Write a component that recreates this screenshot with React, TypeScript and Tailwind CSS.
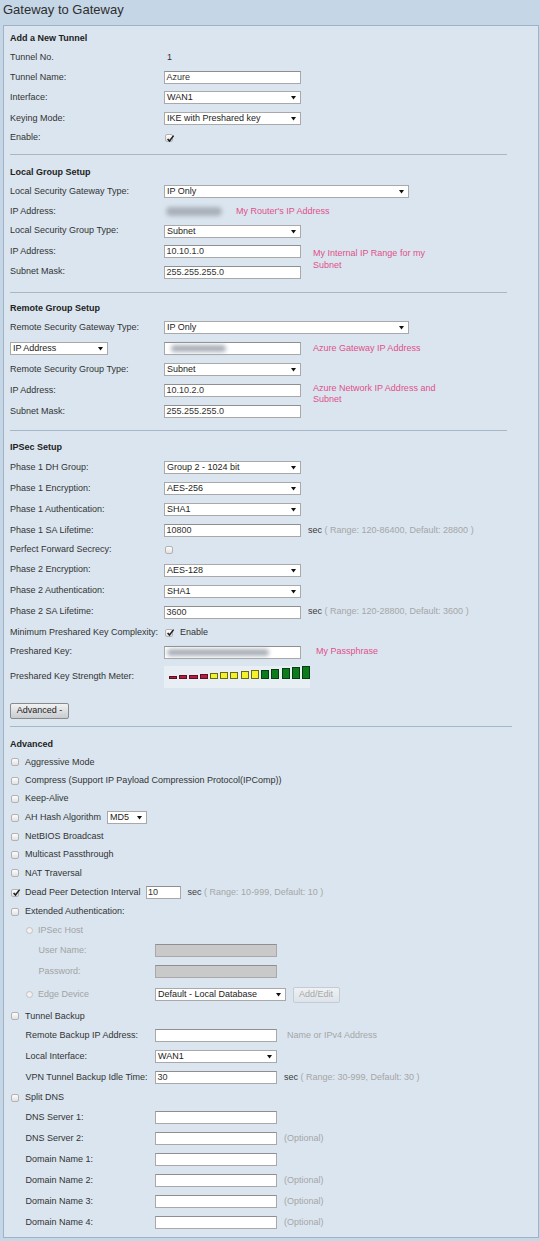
import React from "react";

type Kids = { children?: React.ReactNode };

function Arrow() {
  return (
    <svg width="5" height="5" viewBox="0 0 5 5" className="shrink-0">
      <path d="M0 1h5L2.5 4.6z" fill="#111" />
    </svg>
  );
}

function Check({ on = false, className = "" }: { on?: boolean; className?: string }) {
  return (
    <span
      className={`relative inline-block h-[8px] w-[8px] shrink-0 rounded-[2px] border border-[#b2b2b2] bg-linear-to-b from-[#fdfdfd] to-[#e1e1e1] ${className}`}
    >
      {on && (
        <svg className="absolute left-[-0.5px] top-[-1.5px]" width="9" height="9" viewBox="0 0 9 9">
          <path d="M1.6 4.9l1.9 2.1L7.6 1.6" stroke="#1e1e1e" strokeWidth="1.5" fill="none" />
        </svg>
      )}
    </span>
  );
}

function Radio() {
  return <span className="inline-block h-[7px] w-[7px] shrink-0 rounded-full border border-[#c2c2c2] bg-[#f1f1f1]" />;
}

function Box({ w = "w-[137px]", children, off = false }: Kids & { w?: string; off?: boolean }) {
  return (
    <div
      className={`flex h-[13px] ${w} shrink-0 items-center border border-[#a9a9a9] border-t-[#8f8f8f] pl-[1.5px] leading-none ${
        off ? "bg-[#c9c9c9]" : "bg-white"
      }`}
    >
      {children}
    </div>
  );
}

function Sel({ w = "w-[137px]", value }: { w?: string; value: string }) {
  return (
    <div
      className={`flex h-[13px] ${w} shrink-0 items-center justify-between border border-[#a9a9a9] bg-white pl-[2px] pr-[4px] leading-none text-[#222]`}
    >
      <span>{value}</span>
      <Arrow />
    </div>
  );
}

function Row({
  h,
  label,
  children,
  lw = "w-[154px]",
  lc = "",
}: Kids & { h: string; label?: React.ReactNode; lw?: string; lc?: string }) {
  return (
    <div className={`flex items-center ${h}`}>
      <div className={`${lw} shrink-0 ${lc}`}>{label}</div>
      {children}
    </div>
  );
}

function H({ children }: Kids) {
  return <div className="flex h-[18px] items-center font-bold text-[#222]">{children}</div>;
}

function Note({ children, className = "" }: Kids & { className?: string }) {
  return <div className={`text-[#e0508a] ${className}`}>{children}</div>;
}

function Sec({ range, ml = "ml-[7px]" }: { range: string; ml?: string }) {
  return (
    <span className={`${ml} whitespace-nowrap`}>
      <span className="text-[#3a3a3a]">sec</span>
      <span className="text-[#a6a6a6]"> ( {range} )</span>
    </span>
  );
}

function CheckRow({ h = "h-[18.4px]", on = false, children }: Kids & { h?: string; on?: boolean }) {
  return (
    <div className={`flex items-center ${h}`}>
      <Check on={on} className="ml-[1px] mr-[6px]" />
      {children}
    </div>
  );
}

function Hr({ mr = "mr-[25px]" }: { mr?: string }) {
  return <div className={`h-px ${mr} bg-[#a6b8c8]`} />;
}

const bars = [3, 3.5, 4, 4.5, 6, 6.5, 7, 7.5, 8.5, 9, 10, 11, 12, 13];

function Meter() {
  return (
    <div className="flex h-[22px] w-[146px] items-end gap-[2.2px] bg-[#e7eef4] pb-[9px] pl-[5px]">
      {bars.map((b, i) => (
        <span
          key={i}
          style={{ height: b }}
          className={`w-[8.3px] border ${
            i < 4
              ? "border-[#5e0f22] bg-[#b3203e]"
              : i < 9
              ? "border-[#6a6a16] bg-[#f3f12c]"
              : "border-[#053d0e] bg-[#0b7b1c]"
          }`}
        />
      ))}
    </div>
  );
}

function Blob({ w, h = "h-[7px]" }: { w: string; h?: string }) {
  return <div className={`${w} ${h} rounded-full bg-[#aab0b9] blur-[2px]`} />;
}

export default function App() {
  return (
    <div className="h-[1241px] w-[540px] overflow-hidden bg-[#c5d6e6] font-['Liberation_Sans',Arial,sans-serif] text-[9px] text-[#333]">
      <div className="h-[25px] pl-[3px] text-[13px] leading-[20px] text-[#2e2e2e]">Gateway to Gateway</div>

      <div className="ml-[3px] mr-[1px] border border-[#9fb3c5] bg-[#dae5ef] px-[6px] pb-[4px]">
        {/* Add a new tunnel */}
        <div className="pt-[4px] pb-[6.5px]">
          <H>Add a New Tunnel</H>
          <Row h="h-[19px]" label="Tunnel No.">
            <span className="pl-[3px]">1</span>
          </Row>
          <Row h="h-[20.5px]" label="Tunnel Name:">
            <Box>Azure</Box>
          </Row>
          <Row h="h-[20.5px]" label="Interface:">
            <Sel value="WAN1" />
          </Row>
          <Row h="h-[20.5px]" label="Keying Mode:">
            <Sel value="IKE with Preshared key" />
          </Row>
          <Row h="h-[19px]" label="Enable:">
            <Check on className="ml-[1px]" />
          </Row>
        </div>
        <Hr />

        {/* Local group */}
        <div className="pt-[8.3px] pb-[9.7px]">
          <H>Local Group Setup</H>
          <Row h="h-[20.5px]" label="Local Security Gateway Type:">
            <Sel w="w-[245px]" value="IP Only" />
          </Row>
          <Row h="h-[19px]" label="IP Address:">
            <div className="ml-[2px]">
              <Blob w="w-[56px]" h="h-[9px]" />
            </div>
            <Note className="ml-[14px]">My Router's IP Address</Note>
          </Row>
          <Row h="h-[20.5px]" label="Local Security Group Type:">
            <Sel value="Subnet" />
          </Row>
          <Row h="h-[20.5px]" label="IP Address:">
            <Box>10.10.1.0</Box>
            <Note className="ml-[12px] self-start pt-[7px] leading-[11.5px]">
              My Internal IP Range for my
              <br />
              Subnet
            </Note>
          </Row>
          <Row h="h-[20.5px]" label="Subnet Mask:">
            <Box>255.255.255.0</Box>
          </Row>
        </div>
        <Hr />

        {/* Remote group */}
        <div className="pt-[6.3px] pb-[8px]">
          <H>Remote Group Setup</H>
          <Row h="h-[21px]" label="Remote Security Gateway Type:">
            <Sel w="w-[245px]" value="IP Only" />
          </Row>
          <Row h="h-[21px]" label={<Sel w="w-[98px]" value="IP Address" />}>
            <Box>
              <div className="pl-[4px]">
                <Blob w="w-[55px]" />
              </div>
            </Box>
            <Note className="ml-[12px]">Azure Gateway IP Address</Note>
          </Row>
          <Row h="h-[21px]" label="Remote Security Group Type:">
            <Sel value="Subnet" />
          </Row>
          <Row h="h-[21px]" label="IP Address:">
            <Box>10.10.2.0</Box>
            <Note className="ml-[12px] self-start pt-[3px] leading-[11px]">
              Azure Network IP Address and
              <br />
              Subnet
            </Note>
          </Row>
          <Row h="h-[21px]" label="Subnet Mask:">
            <Box>255.255.255.0</Box>
          </Row>
        </div>
        <Hr />

        {/* IPSec */}
        <div className="pt-[7.8px] pb-[7.4px]">
          <H>IPSec Setup</H>
          <Row h="h-[21px]" label="Phase 1 DH Group:">
            <Sel value="Group 2 - 1024 bit" />
          </Row>
          <Row h="h-[21px]" label="Phase 1 Encryption:">
            <Sel value="AES-256" />
          </Row>
          <Row h="h-[21px]" label="Phase 1 Authentication:">
            <Sel value="SHA1" />
          </Row>
          <Row h="h-[20.5px]" label="Phase 1 SA Lifetime:">
            <Box>10800</Box>
            <Sec range="Range: 120-86400, Default: 28800" />
          </Row>
          <Row h="h-[19px]" label="Perfect Forward Secrecy:">
            <Check className="ml-[1px]" />
          </Row>
          <Row h="h-[21px]" label="Phase 2 Encryption:">
            <Sel value="AES-128" />
          </Row>
          <Row h="h-[21px]" label="Phase 2 Authentication:">
            <Sel value="SHA1" />
          </Row>
          <Row h="h-[21px]" label="Phase 2 SA Lifetime:">
            <Box>3600</Box>
            <Sec range="Range: 120-28800, Default: 3600" />
          </Row>
          <Row h="h-[20px]" label="Minimum Preshared Key Complexity:">
            <Check on className="ml-[1px] mr-[7px]" />
            <span>Enable</span>
          </Row>
          <Row h="h-[19px]" label="Preshared Key:">
            <Box>
              <Blob w="w-[102px]" />
            </Box>
            <Note className="ml-[15px]">My Passphrase</Note>
          </Row>
          <Row h="h-[30px]" label="Preshared Key Strength Meter:">
            <Meter />
          </Row>
          <div className="mt-[11px] flex h-[16px] w-[59px] items-center justify-center rounded-[2px] border border-[#8a8a8a] bg-linear-to-b from-[#f2f2f2] to-[#c8ccd0] text-[#222]">
            Advanced -
          </div>
        </div>
        <Hr mr="mr-[20px]" />

        {/* Advanced */}
        <div className="pt-[8.3px]">
          <H>Advanced</H>
          <CheckRow>Aggressive Mode</CheckRow>
          <CheckRow>Compress (Support IP Payload Compression Protocol(IPComp))</CheckRow>
          <CheckRow>Keep-Alive</CheckRow>
          <CheckRow h="h-[19px]">
            <span className="mr-[6px]">AH Hash Algorithm</span>
            <Sel w="w-[40px]" value="MD5" />
          </CheckRow>
          <CheckRow>NetBIOS Broadcast</CheckRow>
          <CheckRow>Multicast Passthrough</CheckRow>
          <CheckRow>NAT Traversal</CheckRow>
          <CheckRow h="h-[20px]" on>
            <span className="mr-[5px]">Dead Peer Detection Interval</span>
            <Box w="w-[35px]">10</Box>
            <Sec range="Range: 10-999, Default: 10" />
          </CheckRow>
          <CheckRow>Extended Authentication:</CheckRow>

          <div className="flex h-[19.4px] items-center pl-[16px] text-[#a3a3a3]">
            <Radio />
            <span className="ml-[5px]">IPSec Host</span>
          </div>
          <Row h="h-[21px]" label="User Name:" lw="w-[116.5px]" lc="ml-[28.5px] text-[#a3a3a3]">
            <Box w="w-[122px]" off />
          </Row>
          <Row h="h-[21px]" label="Password:" lw="w-[116.5px]" lc="ml-[28.5px] text-[#a3a3a3]">
            <Box w="w-[122px]" off />
          </Row>
          <div className="flex h-[25px] items-center">
            <div className="flex w-[145px] shrink-0 items-center pl-[16px] text-[#a3a3a3]">
              <Radio />
              <span className="ml-[5px]">Edge Device</span>
            </div>
            <Sel w="w-[131px]" value="Default - Local Database" />
            <div className="ml-[6.5px] flex h-[16.5px] w-[47px] items-center justify-center rounded-[2px] border border-[#c3ccd5] bg-linear-to-b from-[#eef2f5] to-[#dde3e9] text-[#a8a8a8]">
              Add/Edit
            </div>
          </div>

          <CheckRow h="h-[18px]">Tunnel Backup</CheckRow>
          <Row h="h-[21px]" label="Remote Backup IP Address:" lw="w-[129.5px]" lc="ml-[15.5px]">
            <Box w="w-[122px]" />
            <span className="ml-[10px] text-[#a6a6a6]">Name or IPv4 Address</span>
          </Row>
          <Row h="h-[21px]" label="Local Interface:" lw="w-[129.5px]" lc="ml-[15.5px]">
            <Sel w="w-[122px]" value="WAN1" />
          </Row>
          <Row h="h-[21px]" label="VPN Tunnel Backup Idle Time:" lw="w-[129.5px]" lc="ml-[15.5px] whitespace-nowrap">
            <Box w="w-[122px]">30</Box>
            <Sec range="Range: 30-999, Default: 30" />
          </Row>

          <CheckRow h="h-[18.5px]">Split DNS</CheckRow>
          {[
            ["DNS Server 1:", false],
            ["DNS Server 2:", true],
            ["Domain Name 1:", false],
            ["Domain Name 2:", true],
            ["Domain Name 3:", true],
            ["Domain Name 4:", true],
          ].map(([l, opt]) => (
            <Row key={l as string} h="h-[21px]" label={l as string} lw="w-[129.5px]" lc="ml-[15.5px]">
              <Box w="w-[122px]" />
              {opt && <span className="ml-[7px] text-[#a6a6a6]">(Optional)</span>}
            </Row>
          ))}
        </div>
      </div>
    </div>
  );
}
